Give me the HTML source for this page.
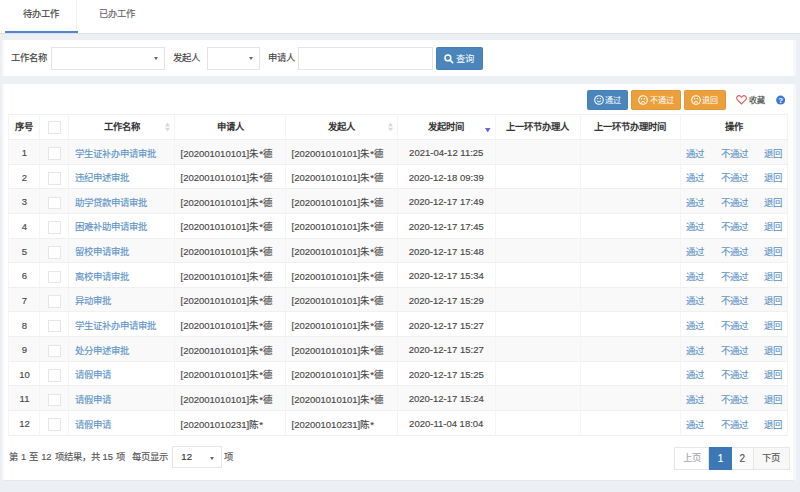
<!DOCTYPE html>
<html lang="zh-CN"><head><meta charset="utf-8">
<style>
*{box-sizing:border-box;margin:0;padding:0}
html,body{width:800px;height:492px;overflow:hidden;background:#eceff3;font-family:"Liberation Sans",sans-serif;color:#333;font-size:9.33px}
body div,body td,body span,body a{-webkit-text-stroke:0.15px currentColor}
th,.btn span{-webkit-text-stroke:0}
.abs{position:absolute}
#tabs{position:absolute;left:0;top:0;width:800px;height:34px;background:#fff;border-bottom:1px solid #dde1e6}
.tab{position:absolute;top:0;height:33px;line-height:29px;text-align:center;color:#555;font-size:9.33px}
#t1{left:5px;width:72px;border-right:1px solid #f0f0f0;color:#444}
#t1:after{content:"";position:absolute;left:0;right:-1.5px;bottom:-0.3px;height:2.5px;background:#5583d4}
#t2{left:78px;width:78px;color:#666}
#p1{position:absolute;left:2px;top:40px;width:794px;height:36px;background:#fff;border-left:2px solid #f5f7f9;border-right:3px solid #f5f7f9}
#p2{position:absolute;left:2px;top:84px;width:794px;height:397px;background:#fff;border-bottom:1px solid #e4e7eb;border-left:2px solid #f5f7f9;border-right:3px solid #f5f7f9}
.lbl{position:absolute;top:0;line-height:36px;color:#444}
.sel{position:absolute;top:7px;height:22.5px;border:1px solid #e4e4e4;background:#fff}
.sel .arr{position:absolute;top:9.5px;width:0;height:0;border-left:2.3px solid transparent;border-right:2.3px solid transparent;border-top:3px solid #666;margin-left:0.7px}
.btn{position:absolute;border-radius:2px;color:#fff;text-align:center;box-shadow:inset 0 0 0 0.6px rgba(0,0,0,0.08)}
table{position:absolute;left:3.5px;top:30px;width:780px;border-collapse:collapse;table-layout:fixed}
td,th{border:1px solid #f0f0f0;border-left-color:#f4f4f4;border-right-color:#f4f4f4;height:24.65px;padding:1.5px 5.5px 0;white-space:nowrap;overflow:hidden;font-size:9.5px;color:#484848}
th{height:25px;padding:0 5.5px 2px;font-weight:bold;text-align:center;color:#333;font-size:9.33px;position:relative}
tbody tr:nth-child(odd) td{background:#f9f9f9}
td.c{text-align:center}
tbody td:first-child{padding-left:7.5px;padding-right:5.5px}
td a{font-size:9.4px}
td a{color:#6195c9;text-decoration:none}
.cb{display:inline-block;width:12.5px;height:12.5px;border:1px solid #e6e6e6;background:#fff;vertical-align:middle;position:relative;top:1px}
th .cb{top:1.7px}
.cb{left:0.6px}
.sort{position:absolute;right:4px;top:7px;width:5px;height:10px}
td.ops{padding:1.5px 0 0}
.ops a+a{margin-left:16.5px}
</style></head><body>
<div id="tabs">
 <div class="tab" id="t1">待办工作</div>
 <div class="tab" id="t2">已办工作</div>
</div>
<div id="p1">
 <div class="lbl" style="left:7px">工作名称</div>
 <div class="sel" style="left:47px;width:113.5px"><span class="arr" style="left:101px;top:9px"></span></div>
 <div class="lbl" style="left:169px">发起人</div>
 <div class="sel" style="left:203px;width:53px"><span class="arr" style="left:40.5px;top:9px"></span></div>
 <div class="lbl" style="left:264px">申请人</div>
 <div class="sel" style="left:294px;width:135px"></div>
 <div class="btn" style="left:432px;top:7px;width:47px;height:22.5px;background:#4a86bc;line-height:22.5px;font-size:9.33px">
  <svg width="10" height="10" viewBox="0 0 10 10" style="position:absolute;left:7.5px;top:6.8px"><circle cx="3.9" cy="3.9" r="2.9" fill="none" stroke="#fff" stroke-width="1.5"/><path d="M6 6L8.6 8.6" stroke="#fff" stroke-width="1.7" stroke-linecap="round"/></svg>
  <span style="position:absolute;left:19.5px;top:0.6px">查询</span>
 </div>
</div>
<div id="p2">
 <div class="btn" style="left:583px;top:6px;width:41px;height:20px;background:#4a86bc;line-height:20px;font-size:8px">
  <svg width="10" height="10" viewBox="0 0 10 10" style="position:absolute;left:7px;top:5.4px"><circle cx="5" cy="5" r="4.3" fill="none" stroke="#fff" stroke-width="1.1"/><circle cx="3.7" cy="3.6" r="0.7" fill="#fff"/><circle cx="6.3" cy="3.6" r="0.7" fill="#fff"/><path d="M2.9 5.7Q5 8.3 7.1 5.7" fill="none" stroke="#fff" stroke-width="1"/></svg>
  <span style="position:absolute;left:18px;top:1px">通过</span>
 </div>
 <div class="btn" style="left:627px;top:6px;width:50px;height:20px;background:#eba03c;line-height:20px;font-size:8px">
  <svg width="10" height="10" viewBox="0 0 10 10" style="position:absolute;left:7px;top:5.4px"><circle cx="5" cy="5" r="4.3" fill="none" stroke="#fff" stroke-width="1.1"/><circle cx="3.6" cy="3.7" r="0.75" fill="#fff"/><circle cx="6.4" cy="3.7" r="0.75" fill="#fff"/><path d="M3 7.5Q5 5.3 7 7.5" fill="none" stroke="#fff" stroke-width="1"/></svg>
  <span style="position:absolute;left:19px;top:1px">不通过</span>
 </div>
 <div class="btn" style="left:680px;top:6px;width:42px;height:20px;background:#eba03c;line-height:20px;font-size:8px">
  <svg width="10" height="10" viewBox="0 0 10 10" style="position:absolute;left:7px;top:5.4px"><circle cx="5" cy="5" r="4.3" fill="none" stroke="#fff" stroke-width="1.1"/><circle cx="3.6" cy="3.7" r="0.75" fill="#fff"/><circle cx="6.4" cy="3.7" r="0.75" fill="#fff"/><path d="M3 7.5Q5 5.3 7 7.5" fill="none" stroke="#fff" stroke-width="1"/></svg>
  <span style="position:absolute;left:18px;top:1px">退回</span>
 </div>
 <svg class="abs" style="left:732px;top:10.7px" width="11" height="10" viewBox="0 0 11 10"><path d="M5.5 9L1.4 4.9C0.3 3.8 0.4 2 1.5 1.2C2.6 0.4 4.3 0.7 5.5 2.2C6.7 0.7 8.4 0.4 9.5 1.2C10.6 2 10.7 3.8 9.6 4.9Z" fill="none" stroke="#e65a5f" stroke-width="1.1"/></svg>
 <div class="abs" style="left:745px;top:11.5px;font-size:8px;color:#444;line-height:10px">收藏</div>
 <svg class="abs" style="left:771px;top:11px" width="10" height="10" viewBox="0 0 10 10"><circle cx="5.6" cy="5.1" r="4.5" fill="#3b78d6"/><text x="5.6" y="8.2" text-anchor="middle" font-family="Liberation Sans" font-weight="bold" font-size="8" fill="#fff">?</text></svg>

 <table id="tbl">
  <colgroup><col style="width:31px"><col style="width:29.75px"><col style="width:105.75px"><col style="width:111px"><col style="width:112px"><col style="width:97.5px"><col style="width:85.5px"><col style="width:99.8px"><col style="width:107.7px"></colgroup>
  <thead><tr>
   <th>序号</th><th><span class="cb"></span></th><th>工作名称<svg class="sort" viewBox="0 0 5 10"><path d="M2.5 0.5L5 4.3H0Z M2.5 9.5L5 5.7H0Z" fill="#d8d8d8"/></svg></th><th>申请人</th><th>发起人<svg class="sort" viewBox="0 0 5 10"><path d="M2.5 0.5L5 4.3H0Z M2.5 9.5L5 5.7H0Z" fill="#d8d8d8"/></svg></th><th>发起时间<svg class="abs" style="right:4px;top:12.5px" width="5.5" height="4.6" viewBox="0 0 5.5 4.6"><path d="M0 0H5.5L2.75 4.6Z" fill="#6767e2"/></svg></th><th>上一环节办理人</th><th>上一环节办理时间</th><th>操作</th>
  </tr></thead>
  <tbody>
<tr><td class="c">1</td><td class="c"><span class="cb"></span></td><td><a>学生证补办申请审批</a></td><td>[202001010101]朱*德</td><td>[202001010101]朱*德</td><td class="c">2021-04-12 11:25</td><td></td><td></td><td class="c ops"><a>通过</a><a>不通过</a><a>退回</a></td></tr>
<tr><td class="c">2</td><td class="c"><span class="cb"></span></td><td><a>违纪申述审批</a></td><td>[202001010101]朱*德</td><td>[202001010101]朱*德</td><td class="c">2020-12-18 09:39</td><td></td><td></td><td class="c ops"><a>通过</a><a>不通过</a><a>退回</a></td></tr>
<tr><td class="c">3</td><td class="c"><span class="cb"></span></td><td><a>助学贷款申请审批</a></td><td>[202001010101]朱*德</td><td>[202001010101]朱*德</td><td class="c">2020-12-17 17:49</td><td></td><td></td><td class="c ops"><a>通过</a><a>不通过</a><a>退回</a></td></tr>
<tr><td class="c">4</td><td class="c"><span class="cb"></span></td><td><a>困难补助申请审批</a></td><td>[202001010101]朱*德</td><td>[202001010101]朱*德</td><td class="c">2020-12-17 17:45</td><td></td><td></td><td class="c ops"><a>通过</a><a>不通过</a><a>退回</a></td></tr>
<tr><td class="c">5</td><td class="c"><span class="cb"></span></td><td><a>留校申请审批</a></td><td>[202001010101]朱*德</td><td>[202001010101]朱*德</td><td class="c">2020-12-17 15:48</td><td></td><td></td><td class="c ops"><a>通过</a><a>不通过</a><a>退回</a></td></tr>
<tr><td class="c">6</td><td class="c"><span class="cb"></span></td><td><a>离校申请审批</a></td><td>[202001010101]朱*德</td><td>[202001010101]朱*德</td><td class="c">2020-12-17 15:34</td><td></td><td></td><td class="c ops"><a>通过</a><a>不通过</a><a>退回</a></td></tr>
<tr><td class="c">7</td><td class="c"><span class="cb"></span></td><td><a>异动审批</a></td><td>[202001010101]朱*德</td><td>[202001010101]朱*德</td><td class="c">2020-12-17 15:29</td><td></td><td></td><td class="c ops"><a>通过</a><a>不通过</a><a>退回</a></td></tr>
<tr><td class="c">8</td><td class="c"><span class="cb"></span></td><td><a>学生证补办申请审批</a></td><td>[202001010101]朱*德</td><td>[202001010101]朱*德</td><td class="c">2020-12-17 15:27</td><td></td><td></td><td class="c ops"><a>通过</a><a>不通过</a><a>退回</a></td></tr>
<tr><td class="c">9</td><td class="c"><span class="cb"></span></td><td><a>处分申述审批</a></td><td>[202001010101]朱*德</td><td>[202001010101]朱*德</td><td class="c">2020-12-17 15:27</td><td></td><td></td><td class="c ops"><a>通过</a><a>不通过</a><a>退回</a></td></tr>
<tr><td class="c">10</td><td class="c"><span class="cb"></span></td><td><a>请假申请</a></td><td>[202001010101]朱*德</td><td>[202001010101]朱*德</td><td class="c">2020-12-17 15:25</td><td></td><td></td><td class="c ops"><a>通过</a><a>不通过</a><a>退回</a></td></tr>
<tr><td class="c">11</td><td class="c"><span class="cb"></span></td><td><a>请假申请</a></td><td>[202001010101]朱*德</td><td>[202001010101]朱*德</td><td class="c">2020-12-17 15:24</td><td></td><td></td><td class="c ops"><a>通过</a><a>不通过</a><a>退回</a></td></tr>
<tr><td class="c">12</td><td class="c"><span class="cb"></span></td><td><a>请假申请</a></td><td>[202001010231]陈*</td><td>[202001010231]陈*</td><td class="c">2020-11-04 18:04</td><td></td><td></td><td class="c ops"><a>通过</a><a>不通过</a><a>退回</a></td></tr>
</tbody>
 </table>

 <div class="abs" style="left:5px;top:366px;line-height:14px;color:#555;word-spacing:0.4px">第 1 至 12 项结果，共 15 项</div>
 <div class="abs" style="left:128px;top:366px;line-height:14px;color:#555">每页显示</div>
 <div class="sel" style="left:167.8px;top:362px;width:49.8px;height:22px;border-color:#e6e6e6"><span class="abs" style="left:8.5px;top:0.3px;line-height:20.5px;font-size:9.6px">12</span><span class="arr" style="left:36.5px;top:9.5px"></span></div>
 <div class="abs" style="left:220px;top:366px;line-height:14px;color:#555">项</div>

 <div class="abs" style="left:669.6px;top:363px;height:22.5px;display:flex;font-size:9.33px">
  <div style="width:35.8px;border:1px solid #e6e6e6;color:#aaa;text-align:center;line-height:21.5px;padding-left:1px">上页</div>
  <div style="width:22.4px;background:#3b78b5;color:#fff;text-align:center;line-height:24.5px;font-size:10px">1</div>
  <div style="width:21.9px;border:1px solid #e6e6e6;border-left:0;background:#fbfbfb;color:#555;text-align:center;line-height:22.5px;font-size:10px">2</div>
  <div style="width:35.9px;border:1px solid #e6e6e6;border-left:0;background:#f8f8f8;color:#555;text-align:center;line-height:21.5px">下页</div>
 </div>
</div>
</body></html>
